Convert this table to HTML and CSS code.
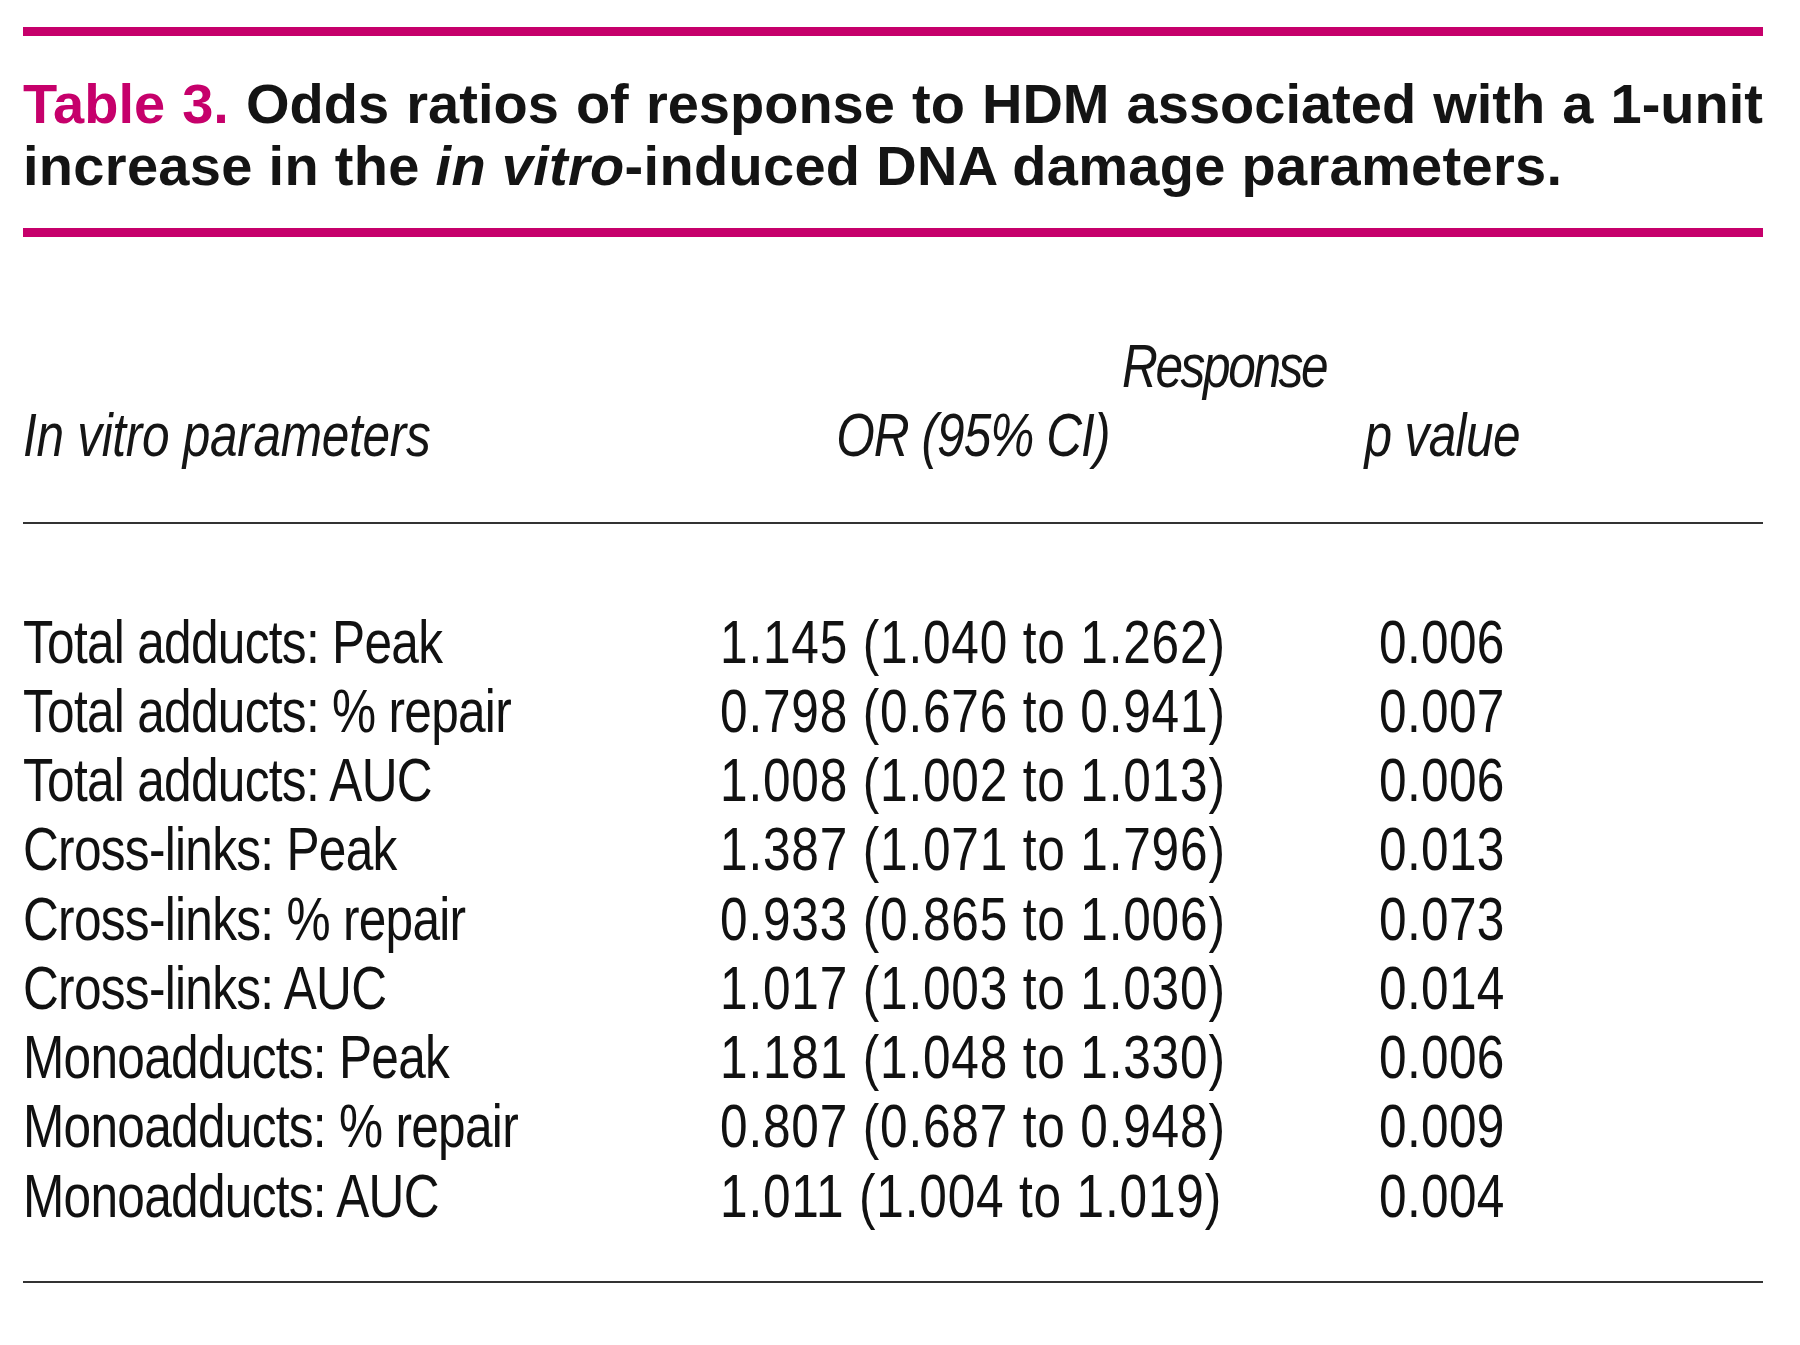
FILE: index.html
```html
<!DOCTYPE html>
<html lang="en">
<head>
<meta charset="utf-8">
<title>Table 3</title>
<link rel="stylesheet" href="styles.css">
</head>
<body>
<div class="page">
  <div class="rule-pink"></div>
  <div class="caption">
    <div class="cap-line cap-line-1"><span class="label">Table 3.</span> <span>Odds ratios of response to HDM associated with a 1-unit</span></div>
    <div class="cap-line cap-line-2"><span>increase in the</span> <em>in vitro</em><span>-induced DNA damage parameters.</span></div>
  </div>
  <div class="rule-pink rule-pink-2"></div>

  <div class="head">
    <div class="head-span"><span class="cx h-resp">Response</span></div>
    <div class="grid head-row">
      <div class="c-label"><span class="cx h-label">In vitro parameters</span></div>
      <div class="c-or center"><span class="cx cc h-or">OR (95% CI)</span></div>
      <div class="c-p center"><span class="cx cc h-p">p value</span></div>
    </div>
  </div>
  <div class="rule-dark rule-mid"></div>

  <div class="grid body">
    <div class="c-label"><span class="cx lab">Total adducts: Peak</span></div><div class="c-or"><span class="cx num">1.145 (1.040 to 1.262)</span></div><div class="c-p"><span class="cx pv">0.006</span></div>
    <div class="c-label"><span class="cx lab">Total adducts: % repair</span></div><div class="c-or"><span class="cx num">0.798 (0.676 to 0.941)</span></div><div class="c-p"><span class="cx pv">0.007</span></div>
    <div class="c-label"><span class="cx lab">Total adducts: AUC</span></div><div class="c-or"><span class="cx num">1.008 (1.002 to 1.013)</span></div><div class="c-p"><span class="cx pv">0.006</span></div>
    <div class="c-label"><span class="cx lab">Cross-links: Peak</span></div><div class="c-or"><span class="cx num">1.387 (1.071 to 1.796)</span></div><div class="c-p"><span class="cx pv">0.013</span></div>
    <div class="c-label"><span class="cx lab">Cross-links: % repair</span></div><div class="c-or"><span class="cx num">0.933 (0.865 to 1.006)</span></div><div class="c-p"><span class="cx pv">0.073</span></div>
    <div class="c-label"><span class="cx lab">Cross-links: AUC</span></div><div class="c-or"><span class="cx num">1.017 (1.003 to 1.030)</span></div><div class="c-p"><span class="cx pv">0.014</span></div>
    <div class="c-label"><span class="cx lab">Monoadducts: Peak</span></div><div class="c-or"><span class="cx num">1.181 (1.048 to 1.330)</span></div><div class="c-p"><span class="cx pv">0.006</span></div>
    <div class="c-label"><span class="cx lab">Monoadducts: % repair</span></div><div class="c-or"><span class="cx num">0.807 (0.687 to 0.948)</span></div><div class="c-p"><span class="cx pv">0.009</span></div>
    <div class="c-label"><span class="cx lab">Monoadducts: AUC</span></div><div class="c-or"><span class="cx num">1.011 (1.004 to 1.019)</span></div><div class="c-p"><span class="cx pv">0.004</span></div>
  </div>
  <div class="rule-dark rule-bottom"></div>
</div>
</body>
</html>
```
FILE: styles.css
```css
html, body {
  margin: 0;
  padding: 0;
  background: #ffffff;
}

.page {
  width: 1740px;
  padding: 27px 37px 0 23px;
  color: #111111;
}

.rule-pink {
  height: 9px;
  background: #c6006b;
}

.rule-pink-2 {
  margin-top: 31px;
}

.caption {
  margin-top: 37px;
  font-family: "Liberation Sans", Arial, sans-serif;
  font-weight: bold;
  font-size: 56px;
  line-height: 62px;
  color: #141414;
}

.cap-line {
  white-space: nowrap;
}

.cap-line-1 {
  text-align: justify;
  text-align-last: justify;
}

.cap-line-2 {
  letter-spacing: 0.3px;
}

.caption .label {
  color: #c6006b;
}

.caption em {
  font-style: italic;
}

/* condensed text: Liberation Sans narrowed horizontally */
.cx {
  display: inline-block;
  white-space: nowrap;
  transform: scaleX(0.8);
  transform-origin: left center;
}

.cx.cc {
  transform-origin: center center;
}

.head {
  margin-top: 94px;
  font-family: "Liberation Sans", Arial, sans-serif;
  font-style: italic;
  font-size: 62px;
  line-height: 69.25px;
  color: #151515;
}

.head-span {
  padding-left: 1099px;
}

.h-resp { letter-spacing: -3px; }
.h-label { letter-spacing: -0.4px; }
.h-or { letter-spacing: -1.2px; }
.h-p { letter-spacing: -0.8px; }

.grid {
  display: grid;
  grid-template-columns: 697px 506px 153px 126px;
}

.c-label { grid-column: 1; }
.c-or { grid-column: 2; }
.c-p { grid-column: 4; }

.center {
  display: flex;
  justify-content: center;
  white-space: nowrap;
}

.rule-dark {
  height: 2px;
  background: #333333;
}

.rule-mid {
  margin-top: 52px;
}

.body {
  margin-top: 83px;
  font-family: "Liberation Sans", Arial, sans-serif;
  font-size: 62px;
  line-height: 69.25px;
  white-space: nowrap;
}

.lab { letter-spacing: -0.9px; }
.num { letter-spacing: 1px; }
.pv { letter-spacing: 0.4px; }

.rule-bottom {
  margin-top: 51px;
}
```
